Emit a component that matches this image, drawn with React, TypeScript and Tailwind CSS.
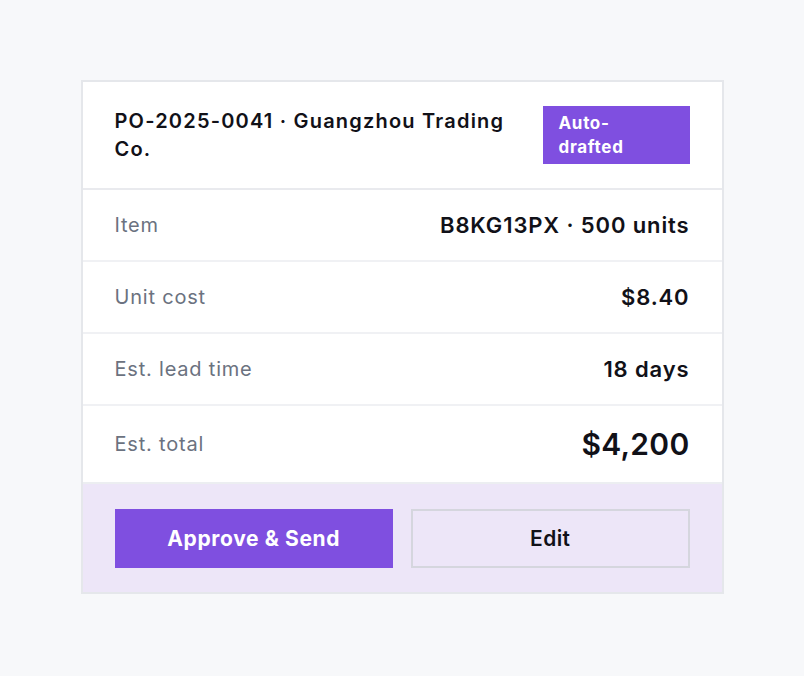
import React from 'react';

const rows = [
  { label: 'Item', value: 'B8KG13PX · 500 units', big: false },
  { label: 'Unit cost', value: '$8.40', big: false },
  { label: 'Est. lead time', value: '18 days', big: false },
  { label: 'Est. total', value: '$4,200', big: true },
];

export default function App() {
  return (
    <div
      className="min-h-screen bg-[#f7f8fa] pt-[80px]"
      style={{ fontFamily: 'Inter, "Noto Sans", sans-serif' }}
    >
      <div className="mx-auto w-[643px] border-2 border-[#e5e7eb] bg-white">
        {/* Header */}
        <div className="flex items-center justify-between gap-9 border-b-2 border-[#e9eaee] px-8 py-6">
          <h2 className="flex-1 text-[20px] font-semibold leading-[28px] tracking-[0.06em] text-[#111118]">
            PO-2025-0041 · Guangzhou Trading Co.
          </h2>
          <span className="w-[147px] shrink-0 bg-[#7f4fe0] px-4 py-[5px] text-[17px] font-bold leading-[24px] tracking-[0.04em] text-white">
            <span className="block w-[90px]">Auto-drafted</span>
          </span>
        </div>

        {/* Details */}
        {rows.map((row, i) => (
          <div
            key={row.label}
            className={`flex items-center justify-between px-8 ${i < rows.length - 1 ? 'h-[72px] border-b-2 border-[#f0f1f4]' : 'h-[78px] border-b-2 border-[#eceef1]'}`}
          >
            <span className="text-[20px] leading-7 tracking-[0.04em] text-[#6b7280]">{row.label}</span>
            <span
              className={`font-semibold text-[#111118] ${row.big ? 'text-[30px] tracking-[0.01em]' : 'text-[22px] tracking-[0.04em]'}`}
            >
              {row.value}
            </span>
          </div>
        ))}

        {/* Actions */}
        <div className="grid grid-cols-2 gap-[18px] bg-[#ede6f8] px-8 pb-6 pt-[25px]">
          <button className="h-[59px] bg-[#7f4fe0] text-[21px] font-bold tracking-[0.03em] text-white">
            Approve &amp; Send
          </button>
          <button className="h-[59px] border-2 border-[#d5d6de] text-[21px] font-semibold tracking-[0.02em] text-[#111118]">
            Edit
          </button>
        </div>
      </div>
    </div>
  );
}
